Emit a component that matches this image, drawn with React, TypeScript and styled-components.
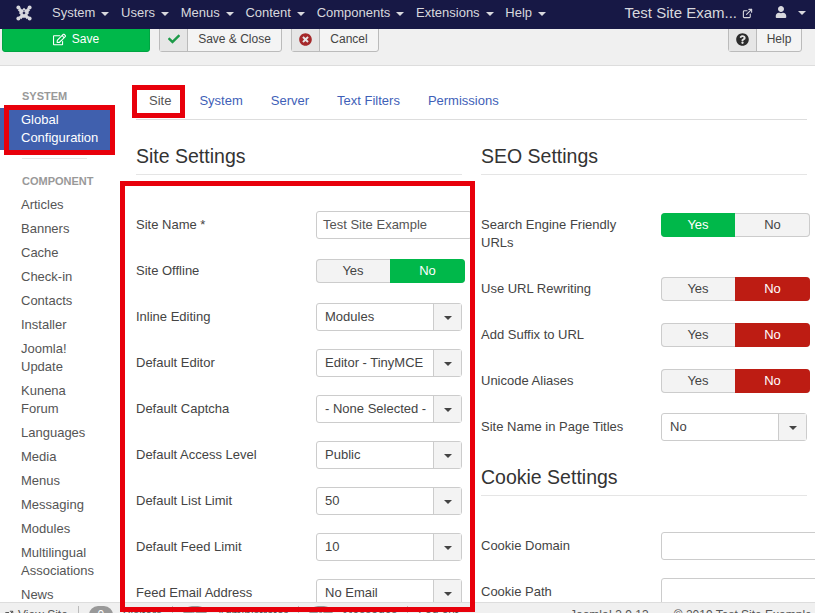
import styled, { createGlobalStyle } from "styled-components";
import { FaCheck, FaQuestionCircle, FaRegEdit, FaTimesCircle, FaUser } from "react-icons/fa";
import { ExternalLink } from "lucide-react";

const menus = ["System", "Users", "Menus", "Content", "Components", "Extensions", "Help"];
const tabs = ["Site", "System", "Server", "Text Filters", "Permissions"];
const components = [
  "Articles",
  "Banners",
  "Cache",
  "Check-in",
  "Contacts",
  "Installer",
  "Joomla! Update",
  "Kunena Forum",
  "Languages",
  "Media",
  "Menus",
  "Messaging",
  "Modules",
  "Multilingual Associations",
  "News",
  "Newsfeeds",
];

type Field = {
  label: string;
  kind: "input" | "select" | "toggle";
  value?: string;
  on?: "Yes" | "No";
  tone?: "green" | "red";
};

const siteFields: Field[] = [
  { label: "Site Name *", kind: "input", value: "Test Site Example" },
  { label: "Site Offline", kind: "toggle", on: "No", tone: "green" },
  { label: "Inline Editing", kind: "select", value: "Modules" },
  { label: "Default Editor", kind: "select", value: "Editor - TinyMCE" },
  { label: "Default Captcha", kind: "select", value: "- None Selected -" },
  { label: "Default Access Level", kind: "select", value: "Public" },
  { label: "Default List Limit", kind: "select", value: "50" },
  { label: "Default Feed Limit", kind: "select", value: "10" },
  { label: "Feed Email Address", kind: "select", value: "No Email" },
];
const seoFields: Field[] = [
  { label: "Search Engine Friendly URLs", kind: "toggle", on: "Yes", tone: "green" },
  { label: "Use URL Rewriting", kind: "toggle", on: "No", tone: "red" },
  { label: "Add Suffix to URL", kind: "toggle", on: "No", tone: "red" },
  { label: "Unicode Aliases", kind: "toggle", on: "No", tone: "red" },
  { label: "Site Name in Page Titles", kind: "select", value: "No" },
];
const cookieFields: Field[] = [
  { label: "Cookie Domain", kind: "input", value: "" },
  { label: "Cookie Path", kind: "input", value: "" },
];

const JoomlaLogo = () => (
  <svg width="18" height="18" viewBox="0 0 18 18" fill="none" stroke="#d8d8de">
    <path d="M4 5 L13 14 M14 5 L5 14" strokeWidth="3.2" />
    <path d="M5 9 L9 5 L13 9 L9 13 Z" strokeWidth="1.6" />
    <path d="M9 7.4 L10.6 9 L9 10.6 L7.4 9 Z" fill="#171845" stroke="none" />
    <circle cx="3.4" cy="3.6" r="2" fill="#d8d8de" stroke="none" />
    <circle cx="14.6" cy="3.6" r="2" fill="#d8d8de" stroke="none" />
    <circle cx="3.4" cy="14.6" r="2" fill="#d8d8de" stroke="none" />
    <circle cx="14.6" cy="14.6" r="2" fill="#d8d8de" stroke="none" />
  </svg>
);

const FieldRow = ({ field, wideInput }: { field: Field; wideInput?: boolean }) => (
  <Row>
    <Label>{field.label}</Label>
    {field.kind === "input" && <TextInput $wide={wideInput}>{field.value}</TextInput>}
    {field.kind === "select" && (
      <SelectBox>
        <SelectValue>{field.value}</SelectValue>
        <SelectArrow>
          <Caret $color="#444" />
        </SelectArrow>
      </SelectBox>
    )}
    {field.kind === "toggle" && (
      <Toggle>
        <ToggleOption $active={field.on === "Yes"} $tone={field.tone}>
          Yes
        </ToggleOption>
        <ToggleOption $active={field.on === "No"} $tone={field.tone}>
          No
        </ToggleOption>
      </Toggle>
    )}
  </Row>
);

const App = () => {
  return (
    <Page>
      <GlobalStyle />
      <NavBar>
        <LogoWrap>
          <JoomlaLogo />
        </LogoWrap>
        <NavMenu>
          {menus.map((menu) => (
            <NavItem key={menu}>
              {menu}
              <Caret $color="#d8d8de" />
            </NavItem>
          ))}
        </NavMenu>
        <SiteName>
          Test Site Exam...
          <ExternalLink size={11} strokeWidth={2.4} />
        </SiteName>
        <UserMenu>
          <FaUser size={12} />
          <Caret $color="#d8d8de" />
        </UserMenu>
      </NavBar>

      <Toolbar>
        <SaveButton>
          <FaRegEdit size={13} />
          Save
        </SaveButton>
        <ToolButton $width={123}>
          <ToolIcon $color="#1c9a48">
            <FaCheck size={12} />
          </ToolIcon>
          <ToolText>Save &amp; Close</ToolText>
        </ToolButton>
        <ToolButton $width={88}>
          <ToolIcon $color="#a5282a">
            <FaTimesCircle size={13} />
          </ToolIcon>
          <ToolText>Cancel</ToolText>
        </ToolButton>
        <HelpSlot>
          <ToolButton $width={74}>
            <ToolIcon $color="#2c2c2c">
              <FaQuestionCircle size={13} />
            </ToolIcon>
            <ToolText>Help</ToolText>
          </ToolButton>
        </HelpSlot>
      </Toolbar>

      <Body>
        <Sidebar>
          <SideHeader>SYSTEM</SideHeader>
          <ActiveItem>Global Configuration</ActiveItem>
          <SideDivider />
          <SideHeader>COMPONENT</SideHeader>
          {components.map((name) => (
            <SideItem key={name}>{name}</SideItem>
          ))}
        </Sidebar>

        <Main>
          <TabBar>
            {tabs.map((tab) => (
              <Tab key={tab} $active={tab === "Site"}>
                {tab}
              </Tab>
            ))}
          </TabBar>
          <Columns>
            <Column>
              <Heading>Site Settings</Heading>
              {siteFields.map((field) => (
                <FieldRow key={field.label} field={field} />
              ))}
            </Column>
            <Column>
              <Heading>SEO Settings</Heading>
              {seoFields.map((field) => (
                <FieldRow key={field.label} field={field} />
              ))}
              <Heading>Cookie Settings</Heading>
              {cookieFields.map((field) => (
                <FieldRow key={field.label} field={field} wideInput />
              ))}
            </Column>
          </Columns>
        </Main>
      </Body>

      <StatusBar>
        <StatusLeft>
          <StatusLink>
            <ExternalLink size={10} strokeWidth={2.4} />
            View Site
          </StatusLink>
          <StatusDivider />
          <StatusBadge>0</StatusBadge>
          <StatusLink>Visitors</StatusLink>
          <StatusDivider />
          <StatusBadge>1</StatusBadge>
          <StatusLink>Administrator</StatusLink>
          <StatusDivider />
          <StatusBadge>0</StatusBadge>
          <StatusLink>Messages</StatusLink>
          <StatusDivider />
          <StatusLink>Log out</StatusLink>
        </StatusLeft>
        <StatusRight>
          <span>Joomla! 3.9.13</span>
          <span>© 2019 Test Site Example</span>
        </StatusRight>
      </StatusBar>

      <RedBox $left={120} $top={181} $width={355} $height={431} />
      <RedBox $left={4} $top={105} $width={111} $height={50} />
      <RedBox $left={132} $top={85} $width={53} $height={33} />
    </Page>
  );
};

export default App;

const GlobalStyle = createGlobalStyle`
  html, body {
    margin: 0;
    padding: 0;
    height: 100%;
    overflow: hidden;
    background: #fff;
  }
  * {
    box-sizing: border-box;
  }
`;

const Page = styled.div`
  position: relative;
  display: flex;
  flex-direction: column;
  width: 815px;
  height: 613px;
  overflow: hidden;
  font-family: "Liberation Sans", Arial, sans-serif;
  font-size: 13px;
  line-height: 18px;
  color: #444;
`;

const NavBar = styled.div`
  display: flex;
  align-items: center;
  flex: 0 0 29px;
  height: 29px;
  background: #171845;
  color: #d8d8de;
  position: relative;
  z-index: 2;
`;

const LogoWrap = styled.div`
  display: flex;
  width: 52px;
  padding-left: 15px;
  padding-bottom: 3px;
`;

const NavMenu = styled.div`
  display: flex;
  gap: 11.7px;
  padding-bottom: 3px;
`;

const NavItem = styled.div`
  display: flex;
  align-items: center;
  gap: 6px;
  white-space: nowrap;
`;

const Caret = styled.span<{ $color: string }>`
  display: inline-block;
  width: 0;
  height: 0;
  margin-top: 2px;
  border-left: 4px solid transparent;
  border-right: 4px solid transparent;
  border-top: 4px solid ${(p) => p.$color};
`;

const SiteName = styled.div`
  display: flex;
  align-items: center;
  gap: 5px;
  margin-left: auto;
  padding-bottom: 3px;
  font-size: 15px;
  white-space: nowrap;
`;

const UserMenu = styled.div`
  display: flex;
  align-items: center;
  gap: 11px;
  margin-left: 22px;
  padding: 0 9px 5px 0;
`;

const Toolbar = styled.div`
  display: flex;
  align-items: flex-end;
  flex: 0 0 37px;
  gap: 9px;
  padding: 0 13px 13px 2px;
  overflow: hidden;
  background: #f0f0f0;
  border-bottom: 1px solid #ddd;
`;

const SaveButton = styled.div`
  display: flex;
  align-items: center;
  justify-content: center;
  gap: 6px;
  width: 148px;
  height: 26px;
  background: #00b84a;
  border: 1px solid #00a542;
  border-radius: 3px;
  color: #fff;
  font-size: 12px;
`;

const ToolButton = styled.div<{ $width: number }>`
  display: flex;
  width: ${(p) => p.$width}px;
  height: 26px;
  background: #f4f4f4;
  border: 1px solid #bbb;
  border-radius: 3px;
  font-size: 12px;
`;

const ToolIcon = styled.div<{ $color: string }>`
  display: flex;
  align-items: center;
  justify-content: center;
  flex: 0 0 28px;
  background: #e6e6e6;
  border-right: 1px solid #bbb;
  color: ${(p) => p.$color};
`;

const ToolText = styled.div`
  flex: 1;
  display: flex;
  align-items: center;
  justify-content: center;
  color: #444;
`;

const HelpSlot = styled.div`
  margin-left: auto;
`;

const Body = styled.div`
  display: flex;
  flex: 1;
  min-height: 0;
  overflow: hidden;
`;

const Sidebar = styled.div`
  flex: 0 0 136px;
  padding-top: 22px;
`;

const SideHeader = styled.div`
  height: 16px;
  margin-bottom: 4px;
  padding-left: 22px;
  font-size: 11px;
  line-height: 16px;
  font-weight: 700;
  color: #999;
`;

const ActiveItem = styled.div`
  width: 110px;
  padding: 3px 8px 3px 21px;
  background: #4060ae;
  color: #fff;
`;

const SideDivider = styled.div`
  width: 65px;
  height: 1px;
  margin: 8px 0 14px 22px;
  background: #e5e5e5;
`;

const SideItem = styled.div`
  width: 105px;
  padding: 3px 0 3px 21px;
  color: #555;
`;

const Main = styled.div`
  flex: 0 0 auto;
  width: 671px;
  padding-top: 18px;
`;

const TabBar = styled.div`
  display: flex;
  gap: 4px;
  height: 36px;
  padding-left: 1px;
  border-bottom: 1px solid #ddd;
`;

const Tab = styled.div<{ $active?: boolean }>`
  height: 35px;
  padding: 8px 12px;
  color: ${(p) => (p.$active ? "#555" : "#3f5fb8")};
`;

const Columns = styled.div`
  display: grid;
  grid-template-columns: 326px 326px;
  column-gap: 19px;
  margin-top: 18px;
`;

const Column = styled.div`
  min-width: 0;
`;

const Heading = styled.h3`
  height: 37px;
  margin: 0 0 36px;
  font-size: 19.5px;
  line-height: 36px;
  font-weight: 400;
  color: #333;
  border-bottom: 1px solid #e5e5e5;
`;

const Row = styled.div`
  display: flex;
  align-items: flex-start;
  margin-bottom: 18px;
`;

const Label = styled.div`
  flex: 0 0 180px;
  padding: 5px 20px 5px 0;
  color: #444;
`;

const TextInput = styled.div<{ $wide?: boolean }>`
  flex: 0 0 auto;
  width: ${(p) => (p.$wide ? "206px" : "156px")};
  height: 28px;
  padding: 4px 6px;
  background: #fff;
  border: 1px solid #ccc;
  border-radius: 3px;
  color: #555;
`;

const SelectBox = styled.div`
  display: flex;
  flex: 0 0 146px;
  width: 146px;
  height: 28px;
  background: #fff;
  border: 1px solid #ccc;
  border-radius: 3px;
`;

const SelectValue = styled.div`
  flex: 1;
  padding: 4px 0 0 8px;
  color: #444;
  white-space: nowrap;
  overflow: hidden;
`;

const SelectArrow = styled.div`
  display: flex;
  align-items: center;
  justify-content: center;
  flex: 0 0 28px;
  background: #f3f3f3;
  border-left: 1px solid #ccc;
`;

const Toggle = styled.div`
  display: flex;
  flex: 0 0 149px;
  width: 149px;
  height: 24px;
  margin-top: 2px;
  border-radius: 4px;
  overflow: hidden;
  background: #f3f3f3;
  box-shadow: inset 0 0 0 1px #ccc;
`;

const ToggleOption = styled.div<{ $active: boolean; $tone?: "green" | "red" }>`
  flex: 1;
  text-align: center;
  line-height: 23px;
  color: ${(p) => (p.$active ? "#fff" : "#444")};
  background: ${(p) =>
    !p.$active ? "transparent" : p.$tone === "green" ? "#00b84a" : "#bd1c13"};
  &:first-child {
    flex: 0 0 74px;
  }
`;

const StatusBar = styled.div`
  display: flex;
  align-items: flex-start;
  flex: 0 0 11px;
  padding: 3px 0 0 4px;
  overflow: hidden;
  background: #f0f0f0;
  border-top: 1px solid #ddd;
  font-size: 12px;
  white-space: nowrap;
  color: #555;
`;

const StatusLeft = styled.div`
  display: flex;
  align-items: flex-start;
  flex: 0 0 566px;
  gap: 10px;
`;

const StatusLink = styled.div`
  display: flex;
  gap: 4px;
  align-items: center;
`;

const StatusDivider = styled.div`
  width: 1px;
  height: 18px;
  background: #bbb;
`;

const StatusBadge = styled.div`
  width: 24px;
  height: 18px;
  border-radius: 10px;
  background: #999;
  color: #fff;
  text-align: center;
`;

const StatusRight = styled.div`
  display: flex;
  flex: 0 0 auto;
  gap: 25px;
`;

const RedBox = styled.div<{ $left: number; $top: number; $width: number; $height: number }>`
  position: absolute;
  left: ${(p) => p.$left}px;
  top: ${(p) => p.$top}px;
  width: ${(p) => p.$width}px;
  height: ${(p) => p.$height}px;
  border: 5px solid #e8000b;
  pointer-events: none;
  z-index: 3;
`;
